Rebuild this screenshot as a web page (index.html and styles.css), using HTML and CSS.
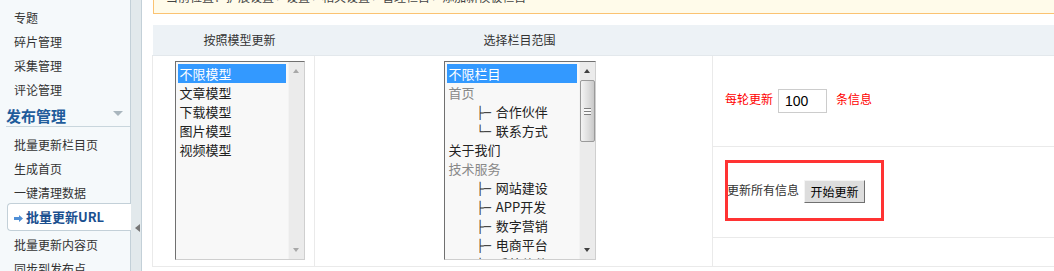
FILE: index.html
```html
<!DOCTYPE html>
<html lang="zh-CN">
<head>
  <meta charset="UTF-8" />
  <title>批量更新URL</title>
  <link rel="stylesheet" href="styles.css">
</head>
<body>
  <div class="sidebar">
    <ul class="menu">
      <li>专题</li>
      <li>碎片管理</li>
      <li>采集管理</li>
      <li>评论管理</li>
    </ul>
    <div class="menu-title">发布管理<span class="fold"></span></div>
    <ul class="menu sub">
      <li>批量更新栏目页</li>
      <li>生成首页</li>
      <li>一键清理数据</li>
      <li class="on"><svg class="arrow" width="9" height="7" viewBox="0 0 9 7"><path d="M0 2h5V0l4 3.5L5 7V5H0z" fill="#4f8fd6"/></svg>批量更新URL</li>
      <li>批量更新内容页</li>
      <li>同步到发布点</li>
    </ul>
  </div>
  <div class="splitter"><span class="toggle"></span></div>

  <div class="main">
    <div class="crumb">当前位置：扩展设置 &gt; 设置 &gt; 相关设置 &gt; 管理栏目 &gt; 添加新模板栏目</div>

    <table class="grid">
      <colgroup>
        <col class="w1">
        <col class="w2">
        <col>
      </colgroup>
      <thead>
        <tr>
          <th>按照模型更新</th>
          <th>选择栏目范围</th>
          <th></th>
        </tr>
      </thead>
      <tbody>
        <tr>
          <td rowspan="3" class="pick">
            <div class="listbox models">
              <div class="options">
                <div class="sel">不限模型</div>
                <div>文章模型</div>
                <div>下载模型</div>
                <div>图片模型</div>
                <div>视频模型</div>
              </div>
              <div class="scroll"><span class="up"></span><span class="down"></span></div>
            </div>
          </td>
          <td rowspan="3" class="pick">
            <div class="listbox cats">
              <div class="options">
                <div class="sel">不限栏目</div>
                <div class="off">首页</div>
                <div><span class="indent"></span><span class="tree">├─</span> 合作伙伴</div>
                <div><span class="indent"></span><span class="tree">└─</span> 联系方式</div>
                <div>关于我们</div>
                <div class="off">技术服务</div>
                <div><span class="indent"></span><span class="tree">├─</span> 网站建设</div>
                <div><span class="indent"></span><span class="tree">├─</span> APP开发</div>
                <div><span class="indent"></span><span class="tree">├─</span> 数字营销</div>
                <div><span class="indent"></span><span class="tree">├─</span> 电商平台</div>
                <div><span class="indent"></span><span class="tree">├─</span> 系统软件</div>
              </div>
              <div class="scroll"><span class="up dark"></span><span class="thumb"><i></i></span><span class="down dark"></span></div>
            </div>
          </td>
          <td class="opt row1">
            <span class="red">每轮更新</span><input type="text" class="num" value="100"><span class="red">条信息</span>
          </td>
        </tr>
        <tr>
          <td class="opt row2">
            <span class="all">更新所有信息</span><button type="button" class="btn">开始更新</button>
            <div class="mark"></div>
          </td>
        </tr>
        <tr>
          <td class="opt row3"></td>
        </tr>
      </tbody>
    </table>
  </div>
</body>
</html>
```

FILE: styles.css
```css
* {
  box-sizing: border-box;
}

body {
  margin: 0;
  height: 271px;
  overflow: hidden;
  display: flex;
  font-family: "Noto Sans CJK SC", sans-serif;
  font-size: 12px;
  color: #333;
  background: #fff;
}

/* left menu */
.sidebar {
  width: 131px;
  flex-shrink: 0;
  background: #f5f9fb;
  border-right: 1px solid #c3d0d8;
  padding-top: 6px;
}

.menu {
  list-style: none;
  margin: 0;
  padding: 0;
}

.menu li {
  height: 24px;
  line-height: 24px;
  padding-left: 14px;
  white-space: nowrap;
}

.menu-title {
  height: 25px;
  margin-left: 6px;
  padding: 2px 7px 0 0;
  border-bottom: 1px solid #c9d6dd;
  display: flex;
  align-items: center;
  justify-content: space-between;
  font-size: 15px;
  font-weight: bold;
  color: #1f5c9b;
}

.fold {
  margin-top: -3px;
  border-left: 5px solid transparent;
  border-right: 5px solid transparent;
  border-top: 5px solid #a9b6be;
}

.menu.sub {
  padding-top: 6px;
}

.menu li.on {
  height: 28px;
  line-height: 26px;
  margin: -2px -1px 2px 7px;
  padding-left: 6px;
  background: #fff;
  border: 1px solid #c3d0d8;
  border-right: 0;
  border-radius: 4px 0 0 4px;
  font-size: 13px;
  font-weight: bold;
  color: #1a4f8f;
}

.arrow {
  margin-right: 3px;
  vertical-align: 0;
}

.splitter {
  width: 11px;
  flex-shrink: 0;
  background: #e2e9ec;
  border-right: 1px solid #c3d0d8;
  padding: 224px 0 0 4px;
}

.toggle {
  display: block;
  width: 0;
  border-top: 4.5px solid transparent;
  border-bottom: 4.5px solid transparent;
  border-right: 5px solid #777;
}

/* main */
.main {
  flex: 1;
  padding-left: 10px;
  overflow: hidden;
}

.crumb {
  margin: -17px -20px 0 1px;
  height: 31px;
  line-height: 26px;
  padding-left: 12px;
  background: #fffbea;
  border: 1px solid #fbc372;
  color: #444;
  white-space: nowrap;
}

.grid {
  margin-top: 11px;
  border-collapse: collapse;
  table-layout: fixed;
  width: 940px;
}

.w1 {
  width: 162px;
}

.w2 {
  width: 398px;
}

.grid th {
  height: 30px;
  padding: 0 0 0 12px;
  background: #edf2f6;
  border-bottom: 1px solid #e3e8ec;
  font-weight: normal;
  font-size: 12px;
  color: #333;
}

.grid td {
  border: 1px solid #eaeaea;
  padding: 0;
}

.grid td.pick {
  text-align: center;
  padding-left: 12px;
  vertical-align: middle;
}

/* list boxes */
.listbox {
  display: inline-flex;
  height: 199px;
  background: #f8f8f8;
  border: 1px solid;
  border-color: #707070 #cfcfcf #cfcfcf #707070;
  text-align: left;
  vertical-align: middle;
}

.models {
  width: 130px;
}

.cats {
  width: 152px;
}

.options {
  flex: 1;
  padding: 2px 2px 0 2px;
  overflow: hidden;
  font-size: 13px;
  color: #222;
  white-space: nowrap;
}

.options div {
  height: 19px;
  line-height: 19px;
  padding-left: 2px;
  overflow: hidden;
}

.options .sel {
  background: #3399ff;
  color: #fff;
}

.options .off {
  color: #888;
}

.indent {
  display: inline-block;
  width: 28px;
}

.tree {
  margin-right: 2px;
  font-family: "DejaVu Sans Mono", monospace;
  font-size: 12px;
  line-height: 1;
  color: #333;
}

.scroll {
  width: 16px;
  flex-shrink: 0;
  background: #ebebeb;
  border-left: 1px solid #f3f3f3;
  display: flex;
  flex-direction: column;
  align-items: center;
  padding: 7px 0 7px;
}

.up,
.down {
  width: 0;
  border-left: 3.5px solid transparent;
  border-right: 3.5px solid transparent;
}

.up {
  border-bottom: 4px solid #a8a8a8;
}

.down {
  margin-top: auto;
  border-top: 4px solid #a8a8a8;
}

.up.dark {
  border-bottom-color: #404040;
}

.down.dark {
  border-top-color: #404040;
}

.thumb {
  margin-top: 7px;
  width: 15px;
  height: 62px;
  border: 1px solid #9a9a9a;
  border-radius: 2px;
  background: linear-gradient(to right, #f4f4f4, #dcdcdc 60%, #c9c9c9);
  display: flex;
  align-items: center;
  justify-content: center;
}

.thumb i {
  width: 7px;
  height: 7px;
  border-top: 1px solid #666;
  border-bottom: 1px solid #666;
  background: linear-gradient(#fff 2px, #666 2px, #666 3px, #fff 3px);
  opacity: 0.8;
}

/* options column */
.grid td.opt {
  padding-left: 12px;
  vertical-align: middle;
}

.row1 {
  height: 91px;
}

.row2 {
  height: 91px;
  position: relative;
}

.row3 {
  height: 29px;
}

.red {
  color: #f00;
}

.num {
  width: 49px;
  height: 24px;
  margin: 0 9px 0 5px;
  padding: 0 0 0 6px;
  border: 1px solid #ccc;
  font-family: "Liberation Sans", sans-serif;
  font-size: 14px;
  color: #000;
  vertical-align: middle;
}

.all {
  margin-left: 2px;
}

.btn {
  width: 61px;
  height: 23px;
  margin-left: 5px;
  padding: 0;
  background: #ddd;
  border: 1px solid;
  border-color: #f4f4f4 #707070 #707070 #f4f4f4;
  font-family: "Noto Sans CJK SC", sans-serif;
  font-size: 12px;
  color: #000;
  vertical-align: middle;
}

/* annotation frame */
.mark {
  position: absolute;
  left: 12px;
  top: 13px;
  width: 159px;
  height: 61px;
  border: 3px solid #f33;
}
```
